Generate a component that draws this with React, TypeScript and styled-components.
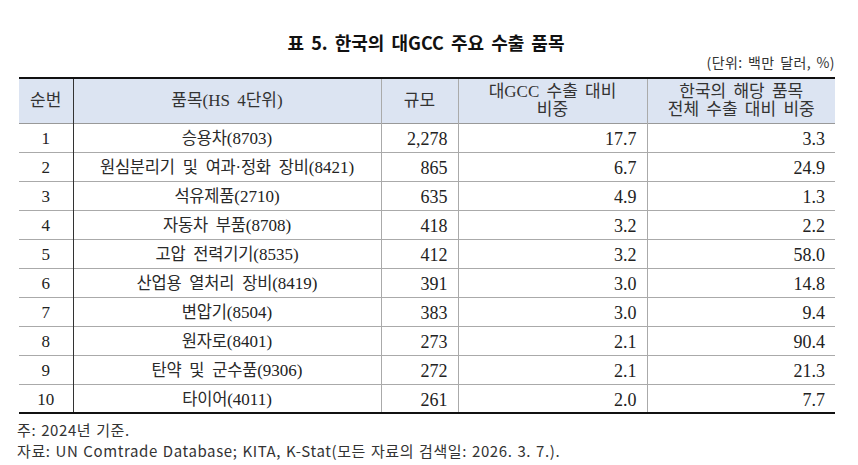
import React from "react";
import styled, { createGlobalStyle } from "styled-components";

const GlobalStyle = createGlobalStyle`
  html, body {
    margin: 0;
    padding: 0;
    background: #ffffff;
  }
  body {
    font-family: "Liberation Serif", "Noto Sans CJK KR", serif;
    color: #222;
  }
`;

const Page = styled.div`
  width: 858px;
  height: 465px;
  padding: 0 23px 0 19px;
  box-sizing: border-box;
  display: flex;
  flex-direction: column;
`;

const Title = styled.h1`
  margin: 31px 0 0 0;
  text-align: center;
  font-family: "Noto Sans CJK KR", sans-serif;
  font-weight: 700;
  font-size: 18px;
  line-height: 22px;
  word-spacing: 3px;
  color: #111;
  padding-right: 2px;
`;

const Unit = styled.div`
  text-align: right;
  font-family: "Noto Sans CJK KR", sans-serif;
  font-size: 14px;
  line-height: 18px;
  letter-spacing: 0.4px;
  word-spacing: 2px;
  color: #333;
`;

const Table = styled.table`
  margin-top: 6px;
  width: 816px;
  border-collapse: collapse;
  table-layout: fixed;
  border-top: 2px solid #111;
  border-bottom: 2px solid #111;
`;

const HeadRow = styled.tr`
  height: 45px;
  background: #dce4f2;
  border-bottom: 1px solid #999;
`;

const Row = styled.tr`
  height: 29px;
  border-bottom: 1px solid #aaa;
  &:last-child {
    border-bottom: none;
  }
`;

const Th = styled.th<{ $dark?: boolean }>`
  font-weight: 400;
  font-size: 17px;
  line-height: 18px;
  word-spacing: 3px;
  color: #333;
  text-align: center;
  padding: 0 4px;
  border-right: 1px solid ${(p) => (p.$dark ? "#333" : "#aaa")};
  &:last-child {
    border-right: none;
  }
`;

const Td = styled.td<{ $align?: "center" | "right"; $dark?: boolean }>`
  font-size: ${(p) => (p.$align === "right" ? "18px" : "17px")};
  line-height: 20px;
  color: #222;
  padding: 3px 10px 0 10px;
  text-align: ${(p) => p.$align ?? "center"};
  border-right: 1px solid ${(p) => (p.$dark ? "#333" : "#aaa")};
  white-space: nowrap;
  &:last-child {
    border-right: none;
  }
`;

const Name = styled.span`
  font-size: 16.5px;
  letter-spacing: -0.2px;
  word-spacing: 4px;
  color: #2a2a2a;
`;

const Notes = styled.div`
  margin-top: 5px;
  margin-left: -2px;
  font-family: "Noto Sans CJK KR", sans-serif;
  font-size: 15px;
  line-height: 21px;
  letter-spacing: 0.6px;
  word-spacing: 1px;
  color: #333;
`;

type Item = {
  name: string;
  code: string;
  size: string;
  share: string;
  total: string;
};

const items: Item[] = [
  { name: "승용차", code: "(8703)", size: "2,278", share: "17.7", total: "3.3" },
  { name: "원심분리기 및 여과·정화 장비", code: "(8421)", size: "865", share: "6.7", total: "24.9" },
  { name: "석유제품", code: "(2710)", size: "635", share: "4.9", total: "1.3" },
  { name: "자동차 부품", code: "(8708)", size: "418", share: "3.2", total: "2.2" },
  { name: "고압 전력기기", code: "(8535)", size: "412", share: "3.2", total: "58.0" },
  { name: "산업용 열처리 장비", code: "(8419)", size: "391", share: "3.0", total: "14.8" },
  { name: "변압기", code: "(8504)", size: "383", share: "3.0", total: "9.4" },
  { name: "원자로", code: "(8401)", size: "273", share: "2.1", total: "90.4" },
  { name: "탄약 및 군수품", code: "(9306)", size: "272", share: "2.1", total: "21.3" },
  { name: "타이어", code: "(4011)", size: "261", share: "2.0", total: "7.7" },
];

export default function App() {
  return (
    <Page>
      <GlobalStyle />
      <Title>표 5. 한국의 대GCC 주요 수출 품목</Title>
      <Unit>(단위: 백만 달러, %)</Unit>
      <Table>
        <colgroup>
          <col style={{ width: 54 }} />
          <col style={{ width: 308 }} />
          <col style={{ width: 77 }} />
          <col style={{ width: 189 }} />
          <col style={{ width: 188 }} />
        </colgroup>
        <thead>
          <HeadRow>
            <Th $dark>순번</Th>
            <Th>품목(HS 4단위)</Th>
            <Th>규모</Th>
            <Th>
              대GCC 수출 대비
              <br />
              비중
            </Th>
            <Th>
              한국의 해당 품목
              <br />
              전체 수출 대비 비중
            </Th>
          </HeadRow>
        </thead>
        <tbody>
          {items.map((it, i) => (
            <Row key={it.code}>
              <Td $dark>{i + 1}</Td>
              <Td>
                <Name>{it.name}</Name>
                {it.code}
              </Td>
              <Td $align="right">{it.size}</Td>
              <Td $align="right">{it.share}</Td>
              <Td $align="right">{it.total}</Td>
            </Row>
          ))}
        </tbody>
      </Table>
      <Notes>
        주: 2024년 기준.
        <br />
        자료: UN Comtrade Database; KITA, K-Stat(모든 자료의 검색일: 2026. 3. 7.).
      </Notes>
    </Page>
  );
}
